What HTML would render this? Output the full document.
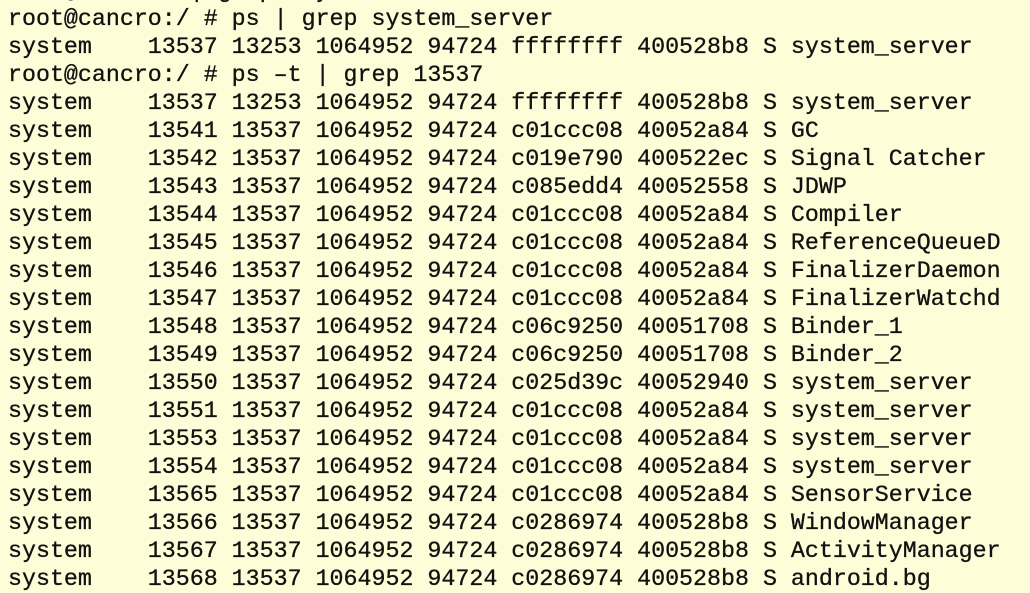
<!DOCTYPE html>
<html><head><meta charset="utf-8"><style>
html,body{margin:0;padding:0;width:1030px;height:580px;overflow:hidden;background:#fdfdd7;}
pre{margin:0;position:absolute;left:8px;top:-23px;font-family:"Liberation Mono","DejaVu Sans Mono",monospace;font-size:23.3px;line-height:28px;color:#111;white-space:pre;-webkit-text-stroke:0.3px #111;}
</style></head><body><pre>root@cancro: | grep  system_server
root@cancro:/ # ps | grep system_server
system    13537 13253 1064952 94724 ffffffff 400528b8 S system_server
root@cancro:/ # ps –t | grep 13537
system    13537 13253 1064952 94724 ffffffff 400528b8 S system_server
system    13541 13537 1064952 94724 c01ccc08 40052a84 S GC
system    13542 13537 1064952 94724 c019e790 400522ec S Signal Catcher
system    13543 13537 1064952 94724 c085edd4 40052558 S JDWP
system    13544 13537 1064952 94724 c01ccc08 40052a84 S Compiler
system    13545 13537 1064952 94724 c01ccc08 40052a84 S ReferenceQueueD
system    13546 13537 1064952 94724 c01ccc08 40052a84 S FinalizerDaemon
system    13547 13537 1064952 94724 c01ccc08 40052a84 S FinalizerWatchd
system    13548 13537 1064952 94724 c06c9250 40051708 S Binder_1
system    13549 13537 1064952 94724 c06c9250 40051708 S Binder_2
system    13550 13537 1064952 94724 c025d39c 40052940 S system_server
system    13551 13537 1064952 94724 c01ccc08 40052a84 S system_server
system    13553 13537 1064952 94724 c01ccc08 40052a84 S system_server
system    13554 13537 1064952 94724 c01ccc08 40052a84 S system_server
system    13565 13537 1064952 94724 c01ccc08 40052a84 S SensorService
system    13566 13537 1064952 94724 c0286974 400528b8 S WindowManager
system    13567 13537 1064952 94724 c0286974 400528b8 S ActivityManager
system    13568 13537 1064952 94724 c0286974 400528b8 S android.bg</pre></body></html>
